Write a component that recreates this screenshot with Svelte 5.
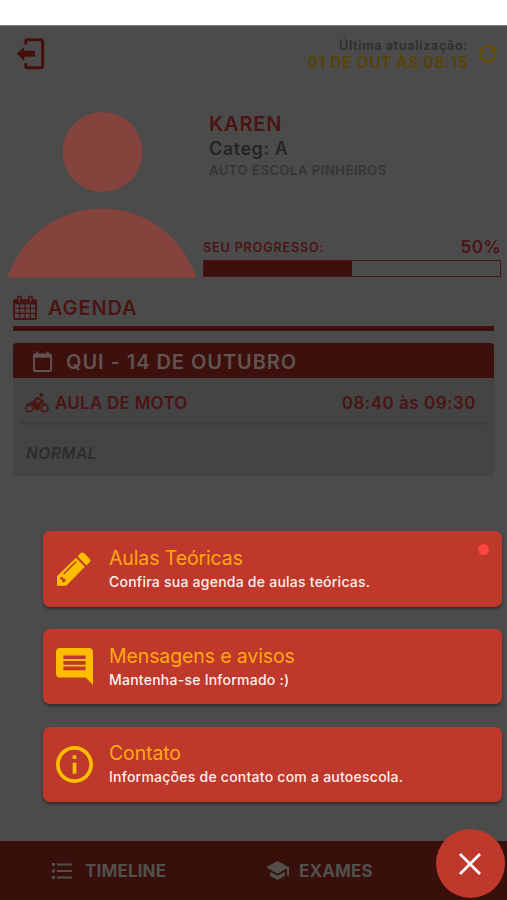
<script lang="ts">
    const progress = 50;

    const actions = [
        { icon: "pencil", title: "Aulas Teóricas", text: "Confira sua agenda de aulas teóricas.", unread: true },
        { icon: "message", title: "Mensagens e avisos", text: "Mantenha-se Informado :)", unread: false },
        { icon: "info", title: "Contato", text: "Informações de contato com a autoescola.", unread: false },
    ];

    let menuOpen = $state(true);
</script>

<div class="app">
    <div class="status-bar"></div>

    <header>
        <svg class="exit" viewBox="0 0 28 32">
            <path d="M8.800 6.500V3.500Q8.800 1.700 10.600 1.700H23.500Q25.600 1.700 25.600 3.800V27.700Q25.600 29.800 23.500 29.800H10.600Q8.800 29.800 8.800 28V25" fill="none" stroke="currentColor" stroke-width="3" />
            <path d="M0 15.700L7.200 8.700V12.700H18V18.700H7.200V22.900Z" fill="currentColor" />
        </svg>
        <div class="updated">
            <span class="updated-label">Última atualização:</span>
            <span class="updated-date">01 DE OUT ÀS 08:15</span>
        </div>
        <svg class="refresh" viewBox="0 0 20 20">
            <path d="M15.200 4.400A7.600 7.600 0 1 0 17.200 12" fill="none" stroke="currentColor" stroke-width="2.300" />
            <path d="M18.500 1.200V8.400H11.300Z" fill="currentColor" />
        </svg>
    </header>

    <section class="profile">
        <svg class="avatar" viewBox="0 0 190 166">
            <circle cx="95.500" cy="40" r="40" />
            <path d="M0 165.500C17 120 55 96.500 95 96.500S173 120 189.500 165.500Z" />
        </svg>
        <div class="details">
            <div class="name">KAREN</div>
            <div class="category">Categ: A</div>
            <div class="school">AUTO ESCOLA PINHEIROS</div>
            <div class="progress-row">
                <span class="progress-label">SEU PROGRESSO:</span>
                <span class="progress-value">{progress}%</span>
            </div>
            <div class="track"><div class="fill" style="width: {progress}%"></div></div>
        </div>
    </section>

    <section class="agenda">
        <h2>
            <svg class="calendar" viewBox="0 0 24 26">
                <path fill-rule="evenodd" d="M2 4H4V2.500Q4 .5 6.500 .5T9 2.500V4H15V2.500Q15 .5 17.500 .5T20 2.500V4H22Q24 4 24 6V23Q24 25 22 25H2Q0 25 0 23V6Q0 4 2 4ZM5.800 2.300V6.500H7.200V2.300ZM16.800 2.300V6.500H18.200V2.300ZM2 9.500V12.700H6V9.500ZM7.300 9.500V12.700H11.400V9.500ZM12.700 9.500V12.700H16.700V9.500ZM18 9.500V12.700H22V9.500ZM2 14V17.800H6V14ZM7.300 14V17.800H11.400V14ZM12.700 14V17.800H16.700V14ZM18 14V17.800H22V14ZM2 19.100V23H6V19.100ZM7.300 19.100V23H11.400V19.100ZM12.700 19.100V23H16.700V19.100ZM18 19.100V23H22V19.100Z" />
            </svg>
            AGENDA
        </h2>
        <div class="day">
            <div class="day-title">
                <svg class="day-icon" viewBox="0 0 20 22">
                    <path d="M18 2.500h-1.500V.5h-2v2h-9v-2h-2v2H2a2 2 0 0 0-2 2V20a2 2 0 0 0 2 2h16a2 2 0 0 0 2-2V4.500a2 2 0 0 0-2-2zM18 20H2V7h16z" />
                </svg>
                QUI - 14 DE OUTUBRO
            </div>
            <div class="lesson">
                <svg class="moto" viewBox="0 0 24 20">
                    <circle cx="4.300" cy="15.200" r="3.500" fill="none" stroke="currentColor" stroke-width="1.500" />
                    <circle cx="19.600" cy="15.200" r="3.500" fill="none" stroke="currentColor" stroke-width="1.500" />
                    <circle cx="16.500" cy="2" r="1.900" />
                    <path d="M5 9.500L8 8.200L11 4.300Q12.300 3.200 13.800 4.200L16.200 6.500H19V8H17.200L20.800 11L19.300 11.800L16.200 10.800Q14.200 13 14.400 17H9.800Q9.500 11.500 4.500 10.800L1 12Q2.300 9.800 5 9.500ZM10.300 9L13.700 9.800L15 8L12.700 6.300Z" />
                </svg>
                <span class="lesson-name">AULA DE MOTO</span>
                <span class="time">08:40 às 09:30</span>
            </div>
            <div class="divider"></div>
            <div class="kind">NORMAL</div>
        </div>
    </section>

    <nav>
        <div class="tab timeline">
            <svg viewBox="0 0 20 16">
                <path d="M0 0h3v3H0zM5 .5h15v2H5zM0 6.500h3v3H0zM5 7h15v2H5zM0 13h3v3H0zM5 13.500h15v2H5z" />
            </svg>
            TIMELINE
        </div>
        <div class="tab exams">
            <svg viewBox="1 3 22 18">
                <path d="M5 13.180v4L12 21l7-3.820v-4L12 17l-7-3.820zM12 3L1 9l11 6 9-4.910V17h2V9L12 3z" />
            </svg>
            EXAMES
        </div>
    </nav>

    {#if menuOpen}
        <div class="menu">
            {#each actions as action}
                <div class="action">
                    <div class="action-icon">
                        {#if action.icon === "pencil"}
                            <svg class="pencil" viewBox="0 0 34 34">
                                <path fill-rule="evenodd" d="M0 24.300L19 5.800L27.800 14.800L9.300 33.700H0ZM6 21.500L7.100 22.600L19.800 10L18.700 8.900ZM3 25.500L5.600 24.800L6.500 26.800L8.800 27.300L8.200 29.600L6 30.400L5 29.200L5.800 28L3.600 27.500Z" />
                                <path d="M20.500 4.300L23.700 1.100Q25.400 -.3 27.200 1.200L32.700 6.700Q34.200 8.500 32.700 10.200L29.400 13.400Z" />
                            </svg>
                        {:else if action.icon === "message"}
                            <svg viewBox="2 2 20 20">
                                <path d="M21.990 4c0-1.100-.89-2-1.990-2H4c-1.100 0-2 .9-2 2v12c0 1.100.9 2 2 2h14l4 4-.01-18zM18 14H6v-2h12v2zm0-3H6V9h12v2zm0-3H6V6h12v2z" />
                            </svg>
                        {:else}
                            <svg viewBox="2 2 20 20">
                                <path d="M11 17h2v-6h-2v6zm1-15C6.480 2 2 6.480 2 12s4.480 10 10 10 10-4.480 10-10S17.520 2 12 2zm0 18c-4.410 0-8-3.590-8-8s3.590-8 8-8 8 3.590 8 8-3.590 8-8 8zM11 9h2V7h-2v2z" />
                            </svg>
                        {/if}
                    </div>
                    <div>
                        <div class="action-title">{action.title}</div>
                        <div class="action-text">{action.text}</div>
                    </div>
                    {#if action.unread}
                        <span class="dot"></span>
                    {/if}
                </div>
            {/each}
        </div>
    {/if}

    <button class="fab" aria-label="Menu" onclick={() => (menuOpen = !menuOpen)}>
        <svg viewBox="0 0 22 22">
            <path d="M1 1L21 21M21 1L1 21" fill="none" stroke="currentColor" stroke-width="2.700" />
        </svg>
    </button>
</div>

<style>
    :global(body) { margin: 0; background: #4b4b4b; }
    .app {
        --red: #3c110d;
        --red-text: #4b1413;
        position: relative;
        width: 507px;
        height: 900px;
        overflow: hidden;
        display: flex;
        flex-direction: column;
        background: #4b4b4b;
        color: var(--red-text);
        font-family: Inter, "Liberation Sans", sans-serif;
        font-weight: 600;
        white-space: nowrap;
    }
    svg { display: block; flex: none; fill: currentColor; }
    .status-bar { height: 25px; background: #fff; border-bottom: 1px solid #797979; }

    header { display: flex; height: 86px; box-sizing: border-box; padding: 12px 9px 0 17px; }
    .exit { width: 28px; height: 32px; color: #45100b; }
    .updated { margin-left: auto; display: flex; flex-direction: column; align-items: flex-end; }
    .updated-label { font-size: 12.5px; line-height: 15px; letter-spacing: 0.72px; color: #2e2e2e; }
    .updated-date { font-size: 15.5px; line-height: 19px; letter-spacing: 0.62px; color: #584200; }
    .refresh { width: 20px; height: 20px; margin: 6px 0 0 10px; color: #664c00; }

    .profile { display: flex; height: 166px; padding: 0 6px 0 7px; }
    .avatar { width: 190px; height: 166px; color: #84433c; }
    .details { flex: 1; margin-left: 6px; }
    .name { margin-left: 6px; font-size: 20px; line-height: 25px; letter-spacing: 0.9px; }
    .category { margin-left: 6px; font-size: 18px; line-height: 24px; letter-spacing: 0.55px; color: #252525; }
    .school { margin-left: 6px; font-size: 13px; line-height: 18px; letter-spacing: 0.55px; color: #363636; }
    .progress-row { display: flex; justify-content: space-between; align-items: baseline; height: 24px; margin-top: 57px; }
    .progress-label { position: relative; top: -1px; font-size: 12.5px; letter-spacing: 0.9px; }
    .progress-value { font-size: 17px; line-height: 22px; letter-spacing: 0.5px; }
    .track { box-sizing: border-box; height: 17px; border: 1px solid var(--red-text); }
    .fill { height: 100%; background: var(--red); }

    .agenda { padding: 0 13px; }
    h2 { display: flex; align-items: center; gap: 11px; height: 53px; box-sizing: border-box; margin: 0 0 12px; padding-top: 18px; padding-bottom: 6px; border-bottom: 5px solid var(--red); font-size: 20px; font-weight: 600; line-height: 25px; letter-spacing: 0.85px; }
    .calendar { width: 24px; height: 26px; }
    .day { height: 133px; border-radius: 4px 4px 0 0; background: #444; overflow: hidden; }
    .day-title { display: flex; align-items: center; gap: 14px; height: 35px; padding: 2px 0 0 20px; box-sizing: border-box; background: var(--red); color: #625351; font-size: 20px; letter-spacing: 0.95px; }
    .day-icon { width: 19px; height: 21px; }
    .lesson { display: flex; align-items: center; height: 43px; box-sizing: border-box; margin: 0 8px; padding: 6px 10px 0 4px; font-size: 17px; letter-spacing: 0.5px; }
    .moto { width: 24px; height: 20px; margin-right: 6px; }
    .lesson-name { letter-spacing: 0.25px; }
    .time { margin-left: auto; }
    .divider { height: 5px; margin: 0 8px; background: linear-gradient(#444, #3b3b3b 45%, #444); }
    .kind { margin: 17px 0 0 13px; font-size: 15.5px; line-height: 22px; letter-spacing: 0.5px; font-style: italic; color: #2c2c2c; }

    nav { display: flex; margin-top: auto; height: 59px; background: #390f0b; color: #51504b; font-size: 17px; letter-spacing: 0.15px; font-weight: 700; }
    .tab { display: flex; align-items: center; }
    .timeline { margin-left: 52px; width: 214px; gap: 13px; }
    .timeline svg { width: 20px; height: 16px; }
    .exams { gap: 10px; }
    .exams svg { width: 23px; height: 19px; }

    .menu { position: absolute; left: 43px; right: 5px; top: 531px; display: flex; flex-direction: column; gap: 22.3px; }
    .action { position: relative; display: flex; align-items: center; height: 75.5px; border-radius: 7px; background: #be382b; box-shadow: 0 2px 3px rgba(0, 0, 0, 0.4); }
    .action-icon { display: flex; justify-content: center; width: 37px; margin: 0 16px 0 13px; color: #ffbd00; }
    .action-icon svg { width: 37px; height: 37px; }
    .action-icon .pencil { width: 34px; height: 34px; margin-right: 2px; }
    .action-title { font-size: 19.5px; line-height: 25px; font-weight: 400; letter-spacing: -0.12px; color: #ffa911; }
    .action-text { font-size: 14px; line-height: 21px; font-weight: 450; letter-spacing: 0.24px; color: #fff0ed; }
    .dot { position: absolute; right: 13px; top: 13px; width: 11px; height: 11px; border-radius: 50%; background: #fa453f; }

    .fab { position: absolute; left: 436px; top: 829px; width: 69px; height: 69px; display: flex; align-items: center; justify-content: center; padding: 0; border: 0; border-radius: 50%; background: #be382b; color: #fff; }
    .fab svg { width: 22px; height: 22px; margin-right: 1px; }
</style>
